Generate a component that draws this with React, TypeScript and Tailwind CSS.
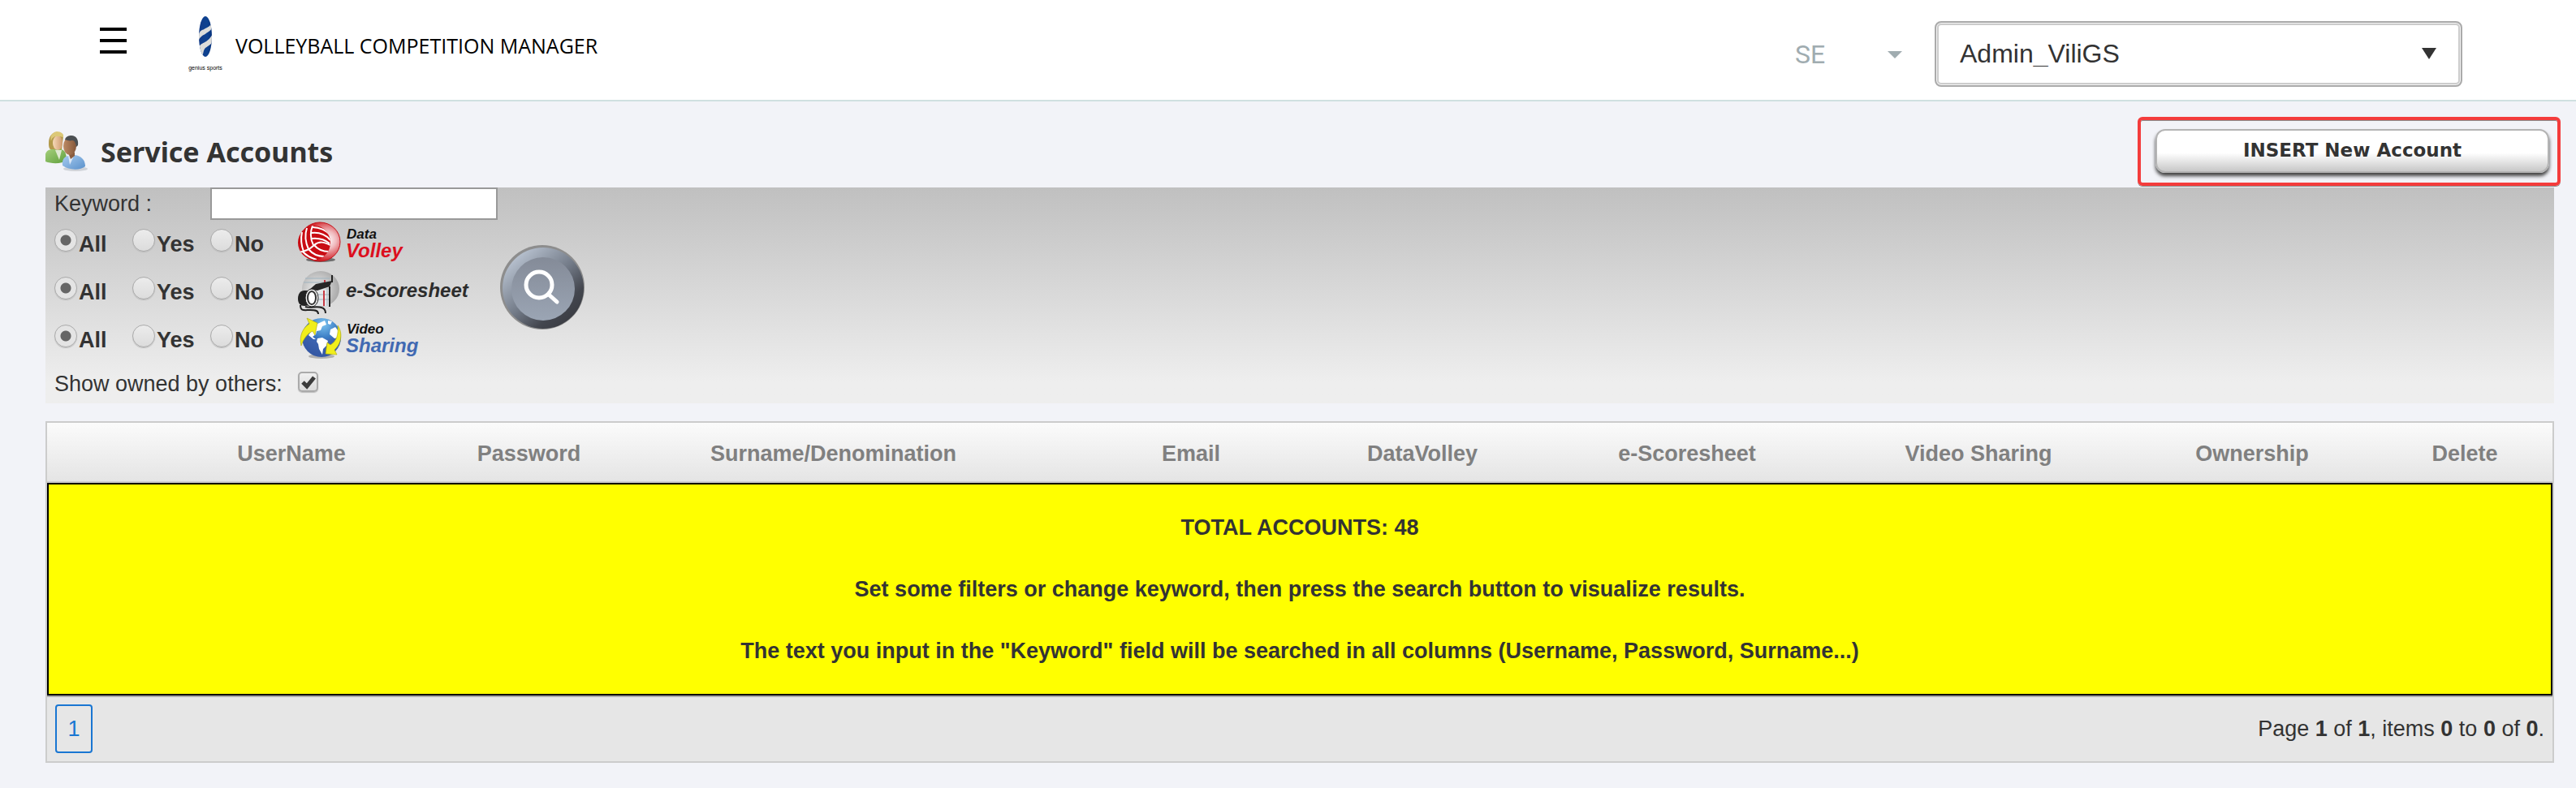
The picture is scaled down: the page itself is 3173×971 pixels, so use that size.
import { useState } from "react";

const COLUMNS = [
  { label: "", width: "w-[78px]" },
  { label: "UserName", width: "w-[446px]" },
  { label: "Password", width: "w-[139px]" },
  { label: "Surname/Denomination", width: "w-[611px]" },
  { label: "Email", width: "w-[270px]" },
  { label: "DataVolley", width: "w-[300px]" },
  { label: "e-Scoresheet", width: "w-[352px]" },
  { label: "Video Sharing", width: "w-[366px]" },
  { label: "Ownership", width: "w-[308px]" },
  { label: "Delete", width: "w-[216px]" },
];

const OPTIONS = ["All", "Yes", "No"];

const FILTERS = [
  { name: "datavolley", Logo: DataVolleyLogo },
  { name: "escoresheet", Logo: ScoresheetLogo },
  { name: "videosharing", Logo: VideoSharingLogo },
];

const LOGO_TEXT = "font-['Liberation_Sans',Arial,sans-serif] font-bold italic";

function GeniusLogo() {
  return (
    <svg viewBox="0 0 44 80" className="w-11 h-20" aria-hidden="true">
      <defs>
        <clipPath id="genius-ball">
          <ellipse cx="22" cy="27" rx="8" ry="25" />
        </clipPath>
        <linearGradient id="genius-blue" x1="0" x2="1">
          <stop offset="0" stopColor="#123a86" />
          <stop offset="0.6" stopColor="#0d4291" />
          <stop offset="1" stopColor="#062f78" />
        </linearGradient>
      </defs>
      <g clipPath="url(#genius-ball)">
        <rect x="13" y="0" width="18" height="54" fill="url(#genius-blue)" />
        <path d="M13 27c2-9 5-7 9-10 4-2 6-3 8-7l1 4c-2 6-5 7-8 9-4 3-7 3-10 10z" fill="#dcdcda" />
        <path d="M13 42c3-7 6-6 10-9 3-2 5-4 8-9v9c-3 5-5 5-9 8-3 3-2 7-4 10-3 1-5-4-5-9z" fill="#dcdcda" />
      </g>
      <text x="22" y="68" textAnchor="middle" fontSize="7" fill="#000" className="font-['Liberation_Sans',Arial,sans-serif]">
        genius sports
      </text>
    </svg>
  );
}

function UsersIcon() {
  return (
    <svg viewBox="0 0 54 52" className="w-[54px] h-[52px]" aria-hidden="true">
      <defs>
        <linearGradient id="u-green" x1="0" x2="1" y2="1">
          <stop offset="0" stopColor="#a5cf7c" />
          <stop offset="1" stopColor="#5f9f3c" />
        </linearGradient>
        <linearGradient id="u-blue" x1="0" x2="1" y2="1">
          <stop offset="0" stopColor="#a9cdf0" />
          <stop offset="1" stopColor="#5a90cb" />
        </linearGradient>
        <linearGradient id="u-skin" x1="0" x2="1">
          <stop offset="0" stopColor="#f6d9b8" />
          <stop offset="1" stopColor="#cf9a70" />
        </linearGradient>
        <linearGradient id="u-tan" x1="0" x2="1">
          <stop offset="0" stopColor="#bd8a64" />
          <stop offset="1" stopColor="#85573a" />
        </linearGradient>
      </defs>
      <ellipse cx="37" cy="47" rx="15" ry="3" fill="#9aa0a8" opacity="0.4" />
      <path d="M4 15C4 6 9 2 14 2c5 0 8 2 8 5l-2 17H8c-4-1-4-5-4-9z" fill="#b39a4c" />
      <path d="M0 29c1-4 4-6 9-6h10c5 1 7 5 7 14-6 4-19 4-26 1z" fill="url(#u-green)" />
      <path d="M12 24l5 12 3-12z" fill="#dfe9d2" />
      <ellipse cx="15" cy="15" rx="6" ry="9" fill="url(#u-skin)" />
      <path d="M7 13C8 7 13 6 22 8c1-4-3-7-8-7-6 1-9 6-7 12z" fill="#dcc878" />
      <path d="M21 43c-1-7 2-11 7-12l8-1c8 1 13 6 13 14-6 5-20 5-28-1z" fill="url(#u-blue)" />
      <path d="M28 31l2 11 5-11z" fill="#dde8f6" />
      <path d="M28 27h8v4l-5 4z" fill="#8a5c3f" />
      <ellipse cx="30" cy="19" rx="8" ry="11" fill="url(#u-tan)" />
      <path d="M24 11c1-4 5-5 8-5 6 0 9 5 8 12l-2 2c-1-5-2-8-5-8-3 1-6 0-9-1z" fill="#4c4f52" />
    </svg>
  );
}

function DataVolleyLogo() {
  return (
    <svg viewBox="0 0 220 58" className="w-[220px] h-[58px]" role="img" aria-label="Data Volley">
      <defs>
        <radialGradient id="dv-ball" cx="0.68" cy="0.45" r="0.65">
          <stop offset="0" stopColor="#fff" />
          <stop offset="0.35" stopColor="#f0b9bd" />
          <stop offset="0.8" stopColor="#d3262c" />
          <stop offset="1" stopColor="#b80f16" />
        </radialGradient>
        <clipPath id="dv-clip">
          <ellipse cx="20" cy="27" rx="20" ry="21" />
        </clipPath>
      </defs>
      <ellipse cx="28" cy="48" rx="18" ry="3" fill="#444" opacity="0.7" />
      <ellipse cx="27" cy="26" rx="25" ry="24" fill="url(#dv-ball)" stroke="#c4151c" />
      <g clipPath="url(#dv-clip)">
        <circle cx="20" cy="27" r="22" fill="#c90d14" />
        <g fill="none" stroke="#fff" strokeWidth="2">
          <path d="M18 6c-3 8-3 16 1 24" />
          <path d="M11 9c-3 9-2 17 2 26" />
          <path d="M5 14c-2 9-1 16 2 24" />
          <path d="M0 39c10-1 15-4 20-9 6-5 12-4 20 0" />
          <path d="M17 15c10-1 18 3 23 9" />
          <path d="M17 22c9-1 17 2 22 6" />
          <path d="M18 8c9 0 17 4 21 9" />
          <path d="M20 30c5 6 11 8 18 8" />
          <path d="M13 35c5 6 12 9 19 9" />
          <path d="M6 38c5 6 10 8 17 10" />
        </g>
      </g>
      <text x="60" y="22" fontSize="17" fill="#111" className={LOGO_TEXT}>Data</text>
      <text x="59" y="45" fontSize="24" fill="#dc0f1e" className={LOGO_TEXT}>Volley</text>
    </svg>
  );
}

function ScoresheetLogo() {
  return (
    <svg viewBox="0 0 220 58" className="w-[220px] h-[58px]" role="img" aria-label="e-Scoresheet">
      <defs>
        <radialGradient id="es-ball" cx="0.4" cy="0.5" r="0.6">
          <stop offset="0" stopColor="#efefef" />
          <stop offset="1" stopColor="#a9a9a9" />
        </radialGradient>
      </defs>
      <ellipse cx="28" cy="25" rx="23" ry="22" fill="url(#es-ball)" />
      <path d="M17 26h22v20H22z" fill="#e6e8ea" />
      <path d="M7 17h33M9 12h30M25 32h15M25 38h14M36 24v22" stroke="#9fb4c0" strokeWidth="1" />
      <path d="M33 14v6M32 27v19" stroke="#c83c46" strokeWidth="2" />
      <path d="M42 8v9M39 22v25" stroke="#222" strokeWidth="2" />
      <path d="M14 26L22 19 42 15 39 22 24 27z" fill="#262626" />
      <path d="M8 27c-5 0-8 4-8 10s3 9 8 9l9-1V27z" fill="#222" />
      <ellipse cx="17" cy="36" rx="8" ry="11" fill="#f1f1f1" stroke="#222" strokeWidth="1" />
      <ellipse cx="17" cy="36" rx="5" ry="8" fill="#fff" stroke="#333" strokeWidth="2" />
      <path d="M3 45c0 8 5 6 12 6s10 1 10 5M9 47c6 2 14-1 20 1 4 1 5 3 5 7" fill="none" stroke="#222" strokeWidth="2" />
      <text x="59" y="35" fontSize="24" fill="#2c2c2c" className={LOGO_TEXT}>e-Scoresheet</text>
    </svg>
  );
}

function VideoSharingLogo() {
  return (
    <svg viewBox="0 0 220 58" className="w-[220px] h-[58px]" role="img" aria-label="Video Sharing">
      <defs>
        <radialGradient id="vs-globe" cx="0.55" cy="0.15" r="0.8">
          <stop offset="0" stopColor="#7cc4f0" />
          <stop offset="0.45" stopColor="#3b7cc4" />
          <stop offset="0.6" stopColor="#3d63b0" />
          <stop offset="1" stopColor="#3458a4" />
        </radialGradient>
      </defs>
      <ellipse cx="29" cy="49" rx="16" ry="3" fill="#999" opacity="0.7" />
      <circle cx="29" cy="26" r="24" fill="url(#vs-globe)" />
      <path d="M18 16l6-7 9-4 2 5-5 2-2 5-5 1-1 4-4 3 4 3-3 0-6-5zM24 27l6-1 7 4-2 6-4 4-1 7-4-7-1-6-2-3zM40 16l6-3 4 5-1 8-4 1-6-5zM37 5l5 1-2 4-3-1z" fill="#fff" />
      <path d="M4 36C1 24 6 14 14 9L11 2l13 6-3 15-3-5C12 21 7 27 4 36z" fill="#f1ee1b" stroke="#a9a40c" strokeWidth="0.6" />
      <path d="M49 11c7 10 4 23-4 30l3 6-14-1 2-14 4 3c8-5 10-13 9-24z" fill="#f1ee1b" stroke="#a9a40c" strokeWidth="0.6" />
      <text x="60" y="21" fontSize="17" fill="#111" className={LOGO_TEXT}>Video</text>
      <text x="59" y="44" fontSize="24" fill="#4169b2" className={LOGO_TEXT}>Sharing</text>
    </svg>
  );
}

function SearchIcon() {
  return (
    <svg viewBox="0 0 104 104" className="w-[104px] h-[104px]" aria-hidden="true">
      <defs>
        <linearGradient id="s-ring" x1="0.15" y1="0.1" x2="0.85" y2="0.9">
          <stop offset="0" stopColor="#b9c3d1" />
          <stop offset="0.5" stopColor="#727a87" />
          <stop offset="0.8" stopColor="#43464e" />
          <stop offset="1" stopColor="#3a3c43" />
        </linearGradient>
        <linearGradient id="s-face" x1="0" y1="0" x2="0" y2="1">
          <stop offset="0" stopColor="#848b98" />
          <stop offset="1" stopColor="#9ba5b4" />
        </linearGradient>
      </defs>
      <circle cx="52" cy="52" r="52" fill="#8d8d8d" />
      <circle cx="53" cy="53" r="50" fill="url(#s-ring)" />
      <circle cx="53" cy="54" r="39" fill="url(#s-face)" />
      <g fill="none" stroke="#fff" strokeWidth="5" strokeLinecap="round">
        <circle cx="48" cy="49" r="16" />
        <path d="M60 61l10 9" />
      </g>
    </svg>
  );
}

function Header() {
  return (
    <header className="flex items-start justify-between h-[125px] bg-white border-b-2 border-[#d0e0e0] pl-[123px] pr-[140px]">
      <div className="flex items-start">
        <button aria-label="Open menu" className="mt-[34px] flex flex-col gap-[10px] w-[33px]">
          <span className="block w-full h-1 bg-black" />
          <span className="block w-full h-1 bg-black" />
          <span className="block w-full h-1 bg-black" />
        </button>
        <a href="#home" className="flex items-start ml-[75px]">
          <span className="mt-[18px]">
            <GeniusLogo />
          </span>
          <span className="mt-10 ml-[15px] font-['Open_Sans',sans-serif] text-[25px] leading-8 text-black">
            VOLLEYBALL COMPETITION MANAGER
          </span>
        </a>
      </div>
      <div className="flex items-center mt-[26px]">
        <div className="relative">
          <select
            aria-label="Season"
            className="appearance-none w-[132px] bg-transparent font-['Roboto',sans-serif] text-[32px] leading-10 text-[#a0acb0]"
          >
            <option>SE</option>
          </select>
          <svg viewBox="0 0 18 9" className="absolute right-0 top-4 w-[18px] h-[9px] pointer-events-none" aria-hidden="true">
            <path d="M0 0h18L9 9z" fill="#a0acb0" />
          </svg>
        </div>
        <div className="relative ml-10">
          <select
            aria-label="User"
            className="appearance-none w-[650px] h-[81px] pl-[29px] pb-[2px] rounded-lg border-2 border-[#aaa] bg-white text-[32px] text-[#333] shadow-[inset_0_0_0_1px_#f4f4f4,inset_0_0_0_3px_#ccc]"
          >
            <option>Admin_ViliGS</option>
          </select>
          <svg viewBox="0 0 18 14" className="absolute right-8 top-[33px] w-[18px] h-[14px] pointer-events-none" aria-hidden="true">
            <path d="M0 0h18L9 14z" fill="#333" />
          </svg>
        </div>
      </div>
    </header>
  );
}

function FilterRow({ name, Logo }: { name: string; Logo: () => React.ReactNode }) {
  const [value, setValue] = useState("All");

  return (
    <div role="radiogroup" aria-label={name} className="flex items-center h-[59px]">
      {OPTIONS.map((option) => (
        <label key={option} className="flex items-center gap-[2px] w-24 font-bold">
          <input
            type="radio"
            name={name}
            value={option}
            checked={value === option}
            onChange={() => setValue(option)}
            className="appearance-none shrink-0 w-7 h-7 mb-[10px] rounded-full border border-[#aaa] bg-linear-to-b from-[#ececec] to-[#dcdcdc] shadow-[0_1px_1px_#bbb] checked:bg-[radial-gradient(circle,#666_6px,#e4e4e4_7px)]"
          />
          {option}
        </label>
      ))}
      <span className="ml-3">
        <Logo />
      </span>
    </div>
  );
}

function Filters() {
  return (
    <form
      onSubmit={(e) => e.preventDefault()}
      className="pl-[11px] bg-linear-to-b from-[#c0c0c0] to-[#eee] to-90%"
    >
      <div className="flex items-center h-10">
        <label htmlFor="keyword" className="w-48">Keyword :</label>
        <input id="keyword" type="text" className="w-[354px] h-10 px-2 border-2 border-[#999] bg-white" />
      </div>
      <div className="flex items-center">
        <div className="w-[549px]">
          {FILTERS.map((filter) => (
            <FilterRow key={filter.name} {...filter} />
          ))}
        </div>
        <button type="submit" aria-label="Search" className="mb-3">
          <SearchIcon />
        </button>
      </div>
      <div className="flex items-center h-[49px]">
        <label htmlFor="others" className="w-[300px]">Show owned by others:</label>
        <span className="relative flex mb-1">
          <input
            id="others"
            type="checkbox"
            defaultChecked
            className="peer appearance-none w-[25px] h-[25px] rounded-[5px] border-2 border-[#aaa] bg-linear-to-b from-[#f0f0f0] to-[#dcdcdc] shadow-[0_1px_1px_#bbb]"
          />
          <svg viewBox="0 0 25 25" className="absolute inset-0 hidden peer-checked:block pointer-events-none" aria-hidden="true">
            <path d="M6 13l5 5 9-11" fill="none" stroke="#3c3c3c" strokeWidth="5" />
          </svg>
        </span>
      </div>
    </form>
  );
}

function AccountsTable() {
  return (
    <section className="mt-[22px] border-2 border-[#ccc] bg-[#e6e6e6]">
      <table className="w-full table-fixed border-separate border-spacing-0">
        <thead>
          <tr className="h-[74px] bg-linear-to-b from-[#fbfbfb] to-[#e4e4e4]">
            {COLUMNS.map(({ label, width }) => (
              <th key={label} className={`${width} px-0 pt-[3px] pb-0 border-b-2 border-[#ccc] font-bold text-[#808080]`}>
                {label}
              </th>
            ))}
          </tr>
        </thead>
        <tbody>
          <tr>
            <td
              colSpan={COLUMNS.length}
              className="border-2 border-black bg-[#ffff00] px-0 py-[34px] text-center font-bold leading-[38px]"
            >
              <p>TOTAL ACCOUNTS: 48</p>
              <p className="mt-[38px]">Set some filters or change keyword, then press the search button to visualize results.</p>
              <p className="mt-[38px]">
                The text you input in the "Keyword" field will be searched in all columns (Username, Password, Surname...)
              </p>
            </td>
          </tr>
        </tbody>
      </table>
      <div className="flex items-center justify-between h-[81px] px-[10px] pb-[2px] border-t-2 border-[#aaa]">
        <button className="w-[46px] h-[60px] rounded border-2 border-[#1976d2] text-[#1976d2]">1</button>
        <p>
          Page <b>1</b> of <b>1</b>, items <b>0</b> to <b>0</b> of <b>0</b>.
        </p>
      </div>
    </section>
  );
}

export default function App() {
  return (
    <div className="min-h-screen bg-[#f2f3f8] font-['Liberation_Sans',Arial,sans-serif] text-[27px] leading-8 text-[#333]">
      <Header />
      <main className="pl-14 pr-[27px]">
        {/* ── Title bar ── */}
        <div className="flex items-end justify-between h-[106px] pb-[2px]">
          <div className="flex items-center gap-[14px] pb-4">
            <UsersIcon />
            <h1 className="font-['Noto_Sans',sans-serif] text-[34px] font-bold">Service Accounts</h1>
          </div>
          <div className="-mr-2 pt-[11px] pb-3 pl-[18px] pr-[10px] rounded-md border-4 border-[#f43c3c] shadow-[0_1px_0_#8a8a8a,inset_0_1px_0_#8a8a8a]">
            <button className="block w-[485px] h-[54px] pb-[2px] rounded-xl border-2 border-[#b4b4b4] bg-linear-to-b from-white from-55% to-[#c8c8c8] font-['DejaVu_Sans',Verdana,sans-serif] text-[23px] font-bold shadow-[0_4px_4px_#444]">
              INSERT New Account
            </button>
          </div>
        </div>
        <Filters />
        <AccountsTable />
      </main>
    </div>
  );
}
